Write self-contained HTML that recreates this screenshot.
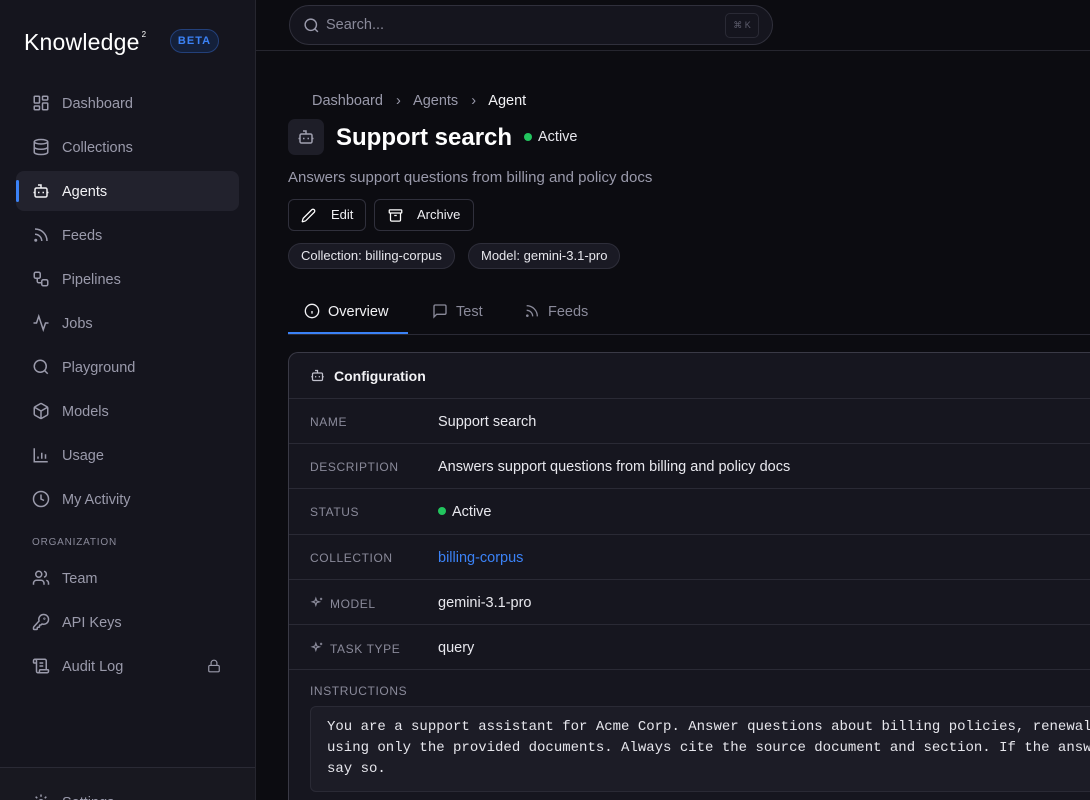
<!DOCTYPE html>
<html><head><meta charset="utf-8"><style>
*{box-sizing:border-box;margin:0;padding:0}
html,body{width:1090px;height:800px;overflow:hidden}
body{background:#0c0c11;font-family:"Liberation Sans",sans-serif;color:#e6e6ec;position:relative}
.sb{position:absolute;left:0;top:0;width:256px;height:800px;background:#15151e;border-right:1px solid #26262f;overflow:hidden}
.logo{position:absolute;left:24px;top:29px;font-size:23px;font-weight:500;color:#fff;letter-spacing:0.2px}
.logo sup{font-size:8px;position:relative;top:-4px;margin-left:2px}
.beta{position:absolute;left:170px;top:29px;width:49px;height:24px;border-radius:12px;border:1px solid #23407a;background:#14203a;color:#3b82f6;font-size:11px;font-weight:700;text-align:center;line-height:22px;letter-spacing:1px}
.nav{position:absolute;left:16px;width:223px;height:40px;border-radius:8px;color:#9a9aab;font-size:14.5px;line-height:42px;padding-left:46px}
.nav svg{position:absolute;left:16px;top:11px}
.nav.act{background:#22222d;color:#f2f2f5}
.nav.act:before{content:"";position:absolute;left:0;top:9px;width:3px;height:22px;background:#3b82f6;border-radius:2px}
.org{position:absolute;left:32px;top:537px;font-size:10px;letter-spacing:0.8px;color:#8a8a9a}
.top{position:absolute;left:256px;top:0;right:0;height:51px;border-bottom:1px solid #26262f;background:#0c0c11}
.search{position:absolute;left:33px;top:5px;width:484px;height:40px;border-radius:20px;border:1px solid #30303c;background:#15151e}
.search span{position:absolute;left:36px;top:11px;font-size:14.5px;color:#8a8a9a}
.kbd{position:absolute;right:13px;top:7px;width:34px;height:25px;border:1px solid #2a2a35;border-radius:5px;font-size:9px;color:#5e5e6e;text-align:center;line-height:23px}
.abs{position:absolute}
.btn{position:absolute;top:199px;height:32px;border:1px solid #30303c;border-radius:6px;font-size:13px;font-weight:500;color:#f0f0f4;line-height:30px}
.chip{position:absolute;top:243px;height:26px;border:1px solid #2e2e3a;border-radius:13px;background:#1a1a24;font-size:13px;line-height:24px;padding:0 12px;color:#e6e6ec}
.tab{position:absolute;top:303px;font-size:14.5px;color:#8a8a9a}
.card{position:absolute;left:288px;top:352px;width:830px;height:448px;border:1px solid #3a3a46;border-bottom:none;border-radius:10px 10px 0 0;background:#16161f;overflow:hidden}
.row{position:absolute;left:0;right:0;height:45px;border-top:1px solid #2a2a35}
.row .l{position:absolute;left:21px;top:16px;font-size:12px;letter-spacing:0.6px;color:#8a8a9a}
.row .l svg{vertical-align:-2px;margin-right:6px}
.row .v{position:absolute;left:149px;top:15px;font-size:14.5px;color:#e8e8ee}
.code{position:absolute;left:21px;top:353px;width:820px;height:86px;border:1px solid #2a2a35;border-radius:6px;background:#1c1c26;font-family:"Liberation Mono",monospace;font-size:14px;line-height:21px;padding:10px 16px;color:#e6e6ec;white-space:pre}
</style></head><body>
<div class="sb">
<div class="logo">Knowledge<sup>2</sup></div>
<div class="beta">BETA</div>
<div class="nav" style="top:83px"><svg width="18" height="18" viewBox="0 0 24 24" fill="none" stroke="currentColor" stroke-width="2"><rect x="3" y="3" width="7" height="9" rx="1"/><rect x="14" y="3" width="7" height="5" rx="1"/><rect x="14" y="12" width="7" height="9" rx="1"/><rect x="3" y="16" width="7" height="5" rx="1"/></svg>Dashboard</div>
<div class="nav" style="top:127px"><svg width="18" height="18" viewBox="0 0 24 24" fill="none" stroke="currentColor" stroke-width="2"><ellipse cx="12" cy="5" rx="9" ry="3"/><path d="M3 5v14c0 1.7 4 3 9 3s9-1.3 9-3V5M3 12c0 1.7 4 3 9 3s9-1.3 9-3"/></svg>Collections</div>
<div class="nav act" style="top:171px"><svg width="18" height="18" viewBox="0 0 24 24" fill="none" stroke="currentColor" stroke-width="2"><path d="M12 8V4H8"/><rect x="4" y="8" width="16" height="12" rx="2"/><path d="M2 14h2M20 14h2M15 13v2M9 13v2"/></svg>Agents</div>
<div class="nav" style="top:215px"><svg width="18" height="18" viewBox="0 0 24 24" fill="none" stroke="currentColor" stroke-width="2"><path d="M4 11a9 9 0 0 1 9 9M4 4a16 16 0 0 1 16 16"/><circle cx="5" cy="19" r="1"/></svg>Feeds</div>
<div class="nav" style="top:259px"><svg width="18" height="18" viewBox="0 0 24 24" fill="none" stroke="currentColor" stroke-width="2"><rect x="3" y="3" width="8" height="8" rx="2"/><rect x="13" y="13" width="8" height="8" rx="2"/><path d="M7 11v4a2 2 0 0 0 2 2h4"/></svg>Pipelines</div>
<div class="nav" style="top:303px"><svg width="18" height="18" viewBox="0 0 24 24" fill="none" stroke="currentColor" stroke-width="2"><path d="M22 12h-4l-3 9L9 3l-3 9H2"/></svg>Jobs</div>
<div class="nav" style="top:347px"><svg width="18" height="18" viewBox="0 0 24 24" fill="none" stroke="currentColor" stroke-width="2"><circle cx="11" cy="11" r="8"/><path d="m21 21-4.3-4.3"/></svg>Playground</div>
<div class="nav" style="top:391px"><svg width="18" height="18" viewBox="0 0 24 24" fill="none" stroke="currentColor" stroke-width="2"><path d="M21 8a2 2 0 0 0-1-1.7l-7-4a2 2 0 0 0-2 0l-7 4A2 2 0 0 0 3 8v8a2 2 0 0 0 1 1.7l7 4a2 2 0 0 0 2 0l7-4a2 2 0 0 0 1-1.7Z"/><path d="M3.3 7 12 12l8.7-5M12 22V12"/></svg>Models</div>
<div class="nav" style="top:435px"><svg width="18" height="18" viewBox="0 0 24 24" fill="none" stroke="currentColor" stroke-width="2"><path d="M3 3v18h18M8 17v-3M13 17V9M18 17v-6"/></svg>Usage</div>
<div class="nav" style="top:479px"><svg width="18" height="18" viewBox="0 0 24 24" fill="none" stroke="currentColor" stroke-width="2"><circle cx="12" cy="12" r="10"/><path d="M12 6v6l4 2"/></svg>My Activity</div>
<div class="org">ORGANIZATION</div>
<div class="nav" style="top:558px"><svg width="18" height="18" viewBox="0 0 24 24" fill="none" stroke="currentColor" stroke-width="2"><path d="M16 21v-2a4 4 0 0 0-4-4H6a4 4 0 0 0-4 4v2"/><circle cx="9" cy="7" r="4"/><path d="M22 21v-2a4 4 0 0 0-3-3.9M16 3.1a4 4 0 0 1 0 7.8"/></svg>Team</div>
<div class="nav" style="top:602px"><svg width="18" height="18" viewBox="0 0 24 24" fill="none" stroke="currentColor" stroke-width="2"><path d="M2.6 18.2A2 2 0 0 0 2 19.6V21a1 1 0 0 0 1 1h3a1 1 0 0 0 1-1v-1a1 1 0 0 1 1-1h1a1 1 0 0 0 1-1v-1a1 1 0 0 1 1-1h.2a2 2 0 0 0 1.4-.6l.8-.8a6.5 6.5 0 1 0-4-4Z"/><circle cx="16.5" cy="7.5" r=".5"/></svg>API Keys</div>
<div class="nav" style="top:646px"><svg width="18" height="18" viewBox="0 0 24 24" fill="none" stroke="currentColor" stroke-width="2"><path d="M15 12h-5M15 8h-5M19 17V5a2 2 0 0 0-2-2H4M8 21h12a2 2 0 0 0 2-2v-1a1 1 0 0 0-1-1H11a1 1 0 0 0-1 1v1a2 2 0 1 1-4 0V5a2 2 0 1 0-4 0v2a1 1 0 0 0 1 1h3"/></svg>Audit Log<svg style="left:191px;top:13px" width="14" height="14" viewBox="0 0 24 24" fill="none" stroke="currentColor" stroke-width="2"><rect x="3" y="11" width="18" height="11" rx="2"/><path d="M7 11V7a5 5 0 0 1 10 0v4"/></svg></div>
<div class="abs" style="left:0;top:767px;width:255px;height:33px;background:#181820;border-top:1px solid #2a2a35"></div>
<div class="nav" style="top:782px"><svg width="18" height="18" viewBox="0 0 24 24" fill="none" stroke="currentColor" stroke-width="2"><circle cx="12" cy="12" r="3"/><path d="M12 2v3M12 19v3M4.9 4.9l2.1 2.1M17 17l2.1 2.1M2 12h3M19 12h3M4.9 19.1 7 17M17 7l2.1-2.1"/></svg>Settings</div>
</div>
<div class="top"><div class="search"><svg style="position:absolute;left:13px;top:11px" width="17" height="17" viewBox="0 0 24 24" fill="none" stroke="#9a9aab" stroke-width="2"><circle cx="11" cy="11" r="8"/><path d="m21 21-4.3-4.3"/></svg><span>Search...</span><div class="kbd">⌘ K</div></div></div>
<div class="abs" style="left:312px;top:93px;font-size:14.5px;color:#9a9aab">Dashboard <span style="margin:0 9px">›</span> Agents <span style="margin:0 9px">›</span> <span style="color:#f2f2f5">Agent</span></div>
<div class="abs" style="left:288px;top:119px;width:36px;height:36px;border-radius:7px;background:#1e1e28"><svg style="position:absolute;left:9px;top:9px" width="18" height="18" viewBox="0 0 24 24" fill="none" stroke="#a0a0b0" stroke-width="2"><path d="M12 8V4H8"/><rect x="4" y="8" width="16" height="12" rx="2"/><path d="M2 14h2M20 14h2M15 13v2M9 13v2"/></svg></div>
<div class="abs" style="left:336px;top:124px;font-size:24px;font-weight:700;color:#fff">Support search</div>
<div class="abs" style="left:524px;top:133px;width:8px;height:8px;border-radius:50%;background:#22c55e"></div>
<div class="abs" style="left:538px;top:129px;font-size:14.5px;color:#e6e6ec">Active</div>
<div class="abs" style="left:288px;top:169px;font-size:15px;color:#9a9aab">Answers support questions from billing and policy docs</div>
<div class="btn" style="left:288px;width:78px"><svg style="position:absolute;left:12px;top:8px" width="15" height="15" viewBox="0 0 24 24" fill="none" stroke="#fff" stroke-width="2"><path d="M21.2 6.8a2.8 2.8 0 0 0-4-4L3.8 16.2a2 2 0 0 0-.5.8l-1.3 4.4a.5.5 0 0 0 .6.6l4.4-1.3a2 2 0 0 0 .8-.5z"/></svg><span style="position:absolute;left:42px">Edit</span></div>
<div class="btn" style="left:374px;width:100px"><svg style="position:absolute;left:13px;top:8px" width="15" height="15" viewBox="0 0 24 24" fill="none" stroke="#fff" stroke-width="2"><rect x="2" y="3" width="20" height="5" rx="1"/><path d="M4 8v11a2 2 0 0 0 2 2h12a2 2 0 0 0 2-2V8M10 12h4"/></svg><span style="position:absolute;left:42px">Archive</span></div>
<div class="chip" style="left:288px">Collection: billing-corpus</div>
<div class="chip" style="left:468px">Model: gemini-3.1-pro</div>
<div class="abs" style="left:288px;top:334px;width:802px;height:1px;background:#2a2a35"></div>
<div class="abs" style="left:288px;top:332px;width:120px;height:2px;background:#3b82f6"></div>
<div class="tab" style="left:304px;color:#f2f2f5"><svg style="vertical-align:-3px;margin-right:8px" width="16" height="16" viewBox="0 0 24 24" fill="none" stroke="currentColor" stroke-width="2"><circle cx="12" cy="12" r="10"/><path d="M12 16v-4M12 8h.01"/></svg>Overview</div>
<div class="tab" style="left:432px"><svg style="vertical-align:-3px;margin-right:8px" width="16" height="16" viewBox="0 0 24 24" fill="none" stroke="currentColor" stroke-width="2"><path d="M21 15a2 2 0 0 1-2 2H7l-4 4V5a2 2 0 0 1 2-2h14a2 2 0 0 1 2 2z"/></svg>Test</div>
<div class="tab" style="left:524px"><svg style="vertical-align:-3px;margin-right:8px" width="16" height="16" viewBox="0 0 24 24" fill="none" stroke="currentColor" stroke-width="2"><path d="M4 11a9 9 0 0 1 9 9M4 4a16 16 0 0 1 16 16"/><circle cx="5" cy="19" r="1"/></svg>Feeds</div>
<div class="card">
<svg style="position:absolute;left:21px;top:15px" width="15" height="15" viewBox="0 0 24 24" fill="none" stroke="#c0c0cc" stroke-width="2"><path d="M12 8V4H8"/><rect x="4" y="8" width="16" height="12" rx="2"/><path d="M2 14h2M20 14h2M15 13v2M9 13v2"/></svg>
<div class="abs" style="left:45px;top:15px;font-size:14px;font-weight:700;color:#f2f2f5">Configuration</div>
<div class="row" style="top:45px"><div class="l">NAME</div><div class="v">Support search</div></div>
<div class="row" style="top:90px"><div class="l">DESCRIPTION</div><div class="v">Answers support questions from billing and policy docs</div></div>
<div class="row" style="top:135px;height:46px"><div class="l">STATUS</div><div class="v"><span style="display:inline-block;width:8px;height:8px;border-radius:50%;background:#22c55e;margin-right:6px;vertical-align:1px"></span>Active</div></div>
<div class="row" style="top:181px"><div class="l">COLLECTION</div><div class="v" style="color:#3b82f6">billing-corpus</div></div>
<div class="row" style="top:226px"><div class="l"><svg width="14" height="14" viewBox="0 0 24 24" fill="none" stroke="currentColor" stroke-width="2"><path d="M10 4l1.5 4.5L16 10l-4.5 1.5L10 16l-1.5-4.5L4 10l4.5-1.5zM19 3v4M17 5h4M5 19h.01"/></svg>MODEL</div><div class="v">gemini-3.1-pro</div></div>
<div class="row" style="top:271px"><div class="l"><svg width="14" height="14" viewBox="0 0 24 24" fill="none" stroke="currentColor" stroke-width="2"><path d="M10 4l1.5 4.5L16 10l-4.5 1.5L10 16l-1.5-4.5L4 10l4.5-1.5zM19 3v4M17 5h4M5 19h.01"/></svg>TASK TYPE</div><div class="v">query</div></div>
<div class="row" style="top:316px;height:200px"><div class="l" style="top:14px">INSTRUCTIONS</div></div>
<div class="code">You are a support assistant for Acme Corp. Answer questions about billing policies, renewals
using only the provided documents. Always cite the source document and section. If the answer
say so.</div>
</div>
</body></html>
